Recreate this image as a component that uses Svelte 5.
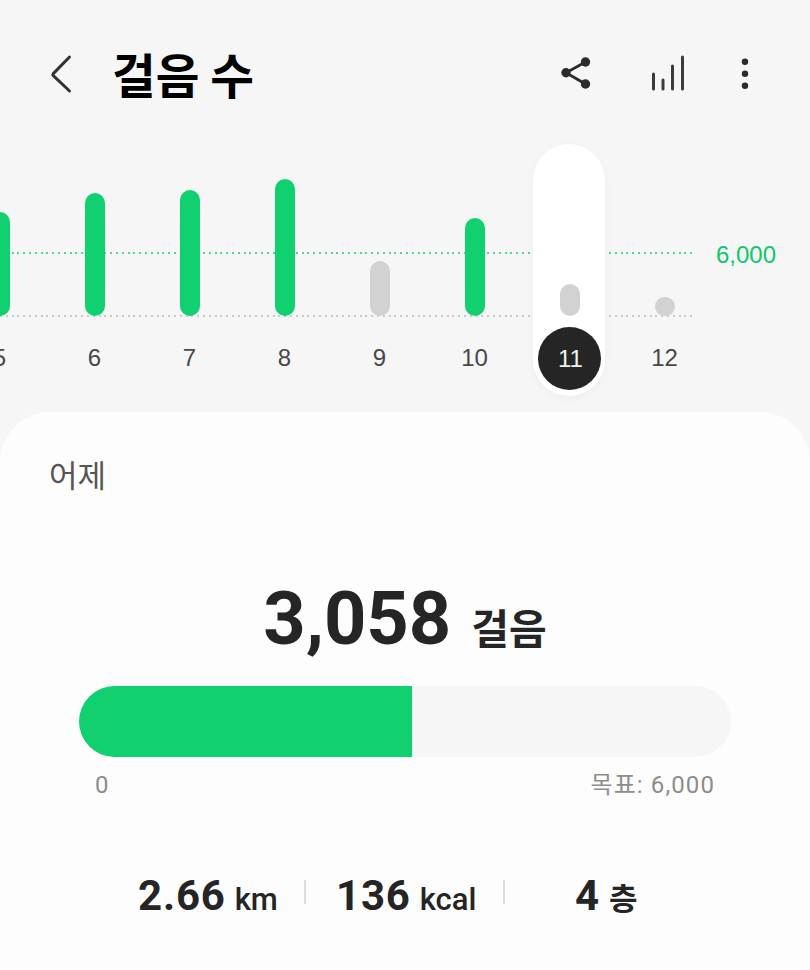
<script>
  const days = [
    { d: '5', h: 104, on: true }, { d: '6', h: 123, on: true }, { d: '7', h: 126, on: true },
    { d: '8', h: 137, on: true }, { d: '9', h: 55 }, { d: '10', h: 98, on: true },
    { d: '11', h: 32, sel: true }, { d: '12', h: 19 }
  ];
</script>

<div class="page">
  <header class="top">
    <svg class="back" width="24" height="40" viewBox="0 0 24 40"><path d="M19.500 3 L3.300 19.600 a1.500 1.500 0 0 0 0 2 L19.500 37" fill="none" stroke="#333" stroke-width="3" stroke-linecap="round" stroke-linejoin="round"/></svg>
    <h1>걸음 수</h1>
    <div class="icons">
      <svg class="i-share" width="32" height="38" viewBox="0 0 32 38"><path d="M24.500 8 L5 18.700 L24.500 30" fill="none" stroke="#2b2b2b" stroke-width="2.800"/><circle cx="24.500" cy="8" r="4.700" fill="#2b2b2b"/><circle cx="5" cy="18.700" r="4.700" fill="#2b2b2b"/><circle cx="24.500" cy="30" r="4.700" fill="#2b2b2b"/></svg>
      <svg class="i-bars" width="36" height="38" viewBox="0 0 36 38"><g stroke="#3c3c3c" stroke-width="3" stroke-linecap="round"><path d="M2.500 20 V35"/><path d="M12 26 V35"/><path d="M21.500 12 V35"/><path d="M31.500 3 V35"/></g></svg>
      <svg class="i-more" width="8" height="38" viewBox="0 0 8 38"><circle cx="4" cy="7.700" r="3.200" fill="#2b2b2b"/><circle cx="4" cy="19.700" r="3.200" fill="#2b2b2b"/><circle cx="4" cy="31.700" r="3.200" fill="#2b2b2b"/></svg>
    </div>
  </header>

  <section class="chart">
    <div class="line green"></div>
    <div class="line gray"></div>
    <span class="goal">6,000</span>
    <div class="cols">
      {#each days as day}
        <div class="col" class:sel={day.sel}>
          <div class="plot"><div class="bar" class:on={day.on} style="height:{day.h}px"></div></div>
          <div class="day">{day.d}</div>
        </div>
      {/each}
    </div>
  </section>

  <section class="card">
    <div class="when">어제</div>
    <div class="total"><strong>3,058</strong><span>걸음</span></div>
    <div class="track"><div class="fill" style="width:51%"></div></div>
    <div class="scale"><span>0</span><span>목표: 6,000</span></div>
    <div class="stats">
      <div class="stat s1"><b>2.66</b><span>km</span></div>
      <i></i>
      <div class="stat s2"><b>136</b><span>kcal</span></div>
      <i></i>
      <div class="stat s3"><b>4</b><span class="floor">층</span></div>
    </div>
  </section>
</div>

<style>
  :global(body) { margin: 0; background: #f6f6f6; }
  .page {
    width: 810px; height: 970px; overflow: hidden; background: #f6f6f6;
    font-family: Roboto, "Noto Sans CJK KR", sans-serif; color: #252525;
  }
  .top { height: 144px; display: flex; align-items: flex-start; padding-left: 50px; box-sizing: border-box; }
  .back { margin-top: 54px; }
  h1 {
    margin: 50px 0 0 38px; font-size: 47.500px; font-weight: 700; color: #000;
    font-family: "Noto Sans CJK KR", sans-serif; line-height: 48px;
  }
  .icons { margin-left: auto; margin-top: 54px; display: flex; padding-right: 61px; }
  .i-share { margin-right: 58px; }
  .i-bars { margin-right: 54px; }
  .chart { position: relative; height: 268px; }
  .line { position: absolute; left: 0; width: 692px; height: 2px; }
  .green { top: 108px; background: repeating-linear-gradient(90deg, #4fd88f 0 2px, transparent 2px 5.800px); }
  .gray { top: 171px; background: repeating-linear-gradient(90deg, #c9c9c9 0 2px, transparent 2px 5.800px); }
  .goal { position: absolute; left: 716px; top: 97px; font-size: 24px; line-height: 28px; color: #10c76c; font-family: "Liberation Sans", sans-serif; }
  .cols { position: relative; display: flex; margin-left: -48px; }
  .col { width: 95px; height: 252px; display: flex; flex-direction: column; align-items: center; }
  .col.sel { position: relative; }
  .col.sel::before {
    content: ''; position: absolute; left: 11px; width: 72px; top: 0; height: 252px; border-radius: 36px;
    background: #fff; box-shadow: 0 2px 8px rgba(0,0,0,.04);
  }
  .plot { position: relative; height: 172px; display: flex; align-items: flex-end; }
  .bar { width: 20px; border-radius: 10px; background: #d2d2d2; }
  .bar.on { background: #11d06f; }
  .day {
    position: relative; width: 63px; height: 63px; margin-top: 10px; border-radius: 50%;
    display: flex; align-items: center; justify-content: center;
    font-size: 24px; color: #484848; font-family: "Liberation Sans", sans-serif;
  }
  .sel .day { background: #252525; color: #f2f2f2; padding-left: 2px; box-sizing: border-box; margin-top: 11px; }
  .card {
    height: 558px; background: #fdfdfd; border-radius: 50px 50px 0 0; box-sizing: border-box;
    padding: 44px 79px 0;
  }
  .when { margin-left: -30px; font-size: 31px; line-height: 36px; color: #555; font-family: "Noto Sans CJK KR", sans-serif; }
  .total { display: flex; align-items: baseline; justify-content: center; gap: 20px; margin-top: 87px; height: 80px; }
  .total strong { font-size: 74px; font-weight: 700; line-height: 80px; }
  .total span { font-size: 41px; font-weight: 700; font-family: "Noto Sans CJK KR", sans-serif; line-height: 1; }
  .track { height: 71px; width: 652px; border-radius: 36px; background: #f6f6f6; overflow: hidden; margin-top: 27px; }
  .fill { height: 100%; background: #11d06f; }
  .scale { display: flex; justify-content: space-between; padding: 0 16px; margin-top: 14px; font-size: 24px; line-height: 28px; color: #8d8d8d; letter-spacing: 1.100px; }
  .stats { display: flex; align-items: center; margin-top: 73px; margin-left: -79px; height: 48px; }
  .stat { display: flex; align-items: baseline; justify-content: flex-start; gap: 9px; }
  .stat b { font-size: 42px; font-weight: 700; line-height: 48px; letter-spacing: 0.800px; }
  .stat span { font-size: 31px; font-weight: 500; font-family: Roboto, "Noto Sans CJK KR", sans-serif; }
  .stat .floor { font-weight: 700; }
  .s1 { margin-left: 138px; width: 166px; }
  .s2 { margin-left: 30px; width: 167px; }
  .s3 { margin-left: 70px; }
  .stats i { width: 2px; height: 24px; background: #dcdcdc; margin-top: -8px; }
</style>
